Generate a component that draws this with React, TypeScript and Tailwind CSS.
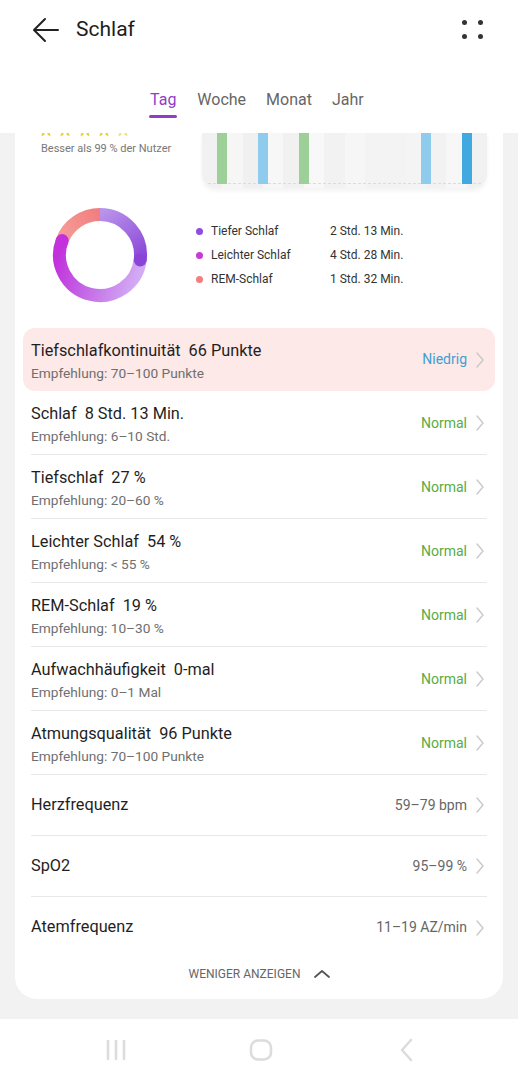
import React from "react";

const FONT = { fontFamily: "Roboto, 'Noto Sans', 'Liberation Sans', sans-serif" };

function Chevron() {
  return (
    <svg width="10" height="18" viewBox="0 0 10 18" className="shrink-0">
      <path d="M2 2 L8 9 L2 16" fill="none" stroke="#c9c9c9" strokeWidth="1.4" strokeLinecap="round" strokeLinejoin="round" />
    </svg>
  );
}

function pt(r: number, a: number) {
  const rad = (a * Math.PI) / 180;
  return [50 + r * Math.sin(rad), 50 - r * Math.cos(rad)];
}
function arc(r: number, a0: number, a1: number) {
  const [x0, y0] = pt(r, a0);
  const [x1, y1] = pt(r, a1);
  const large = a1 - a0 > 180 ? 1 : 0;
  return `M ${x0} ${y0} A ${r} ${r} 0 ${large} 1 ${x1} ${y1}`;
}

function Donut() {
  const r = 40.5;
  const sw = 13;
  const [dx, dy] = pt(r, 97);
  const [lx, ly] = pt(r, 291);
  return (
    <svg width="100" height="100" viewBox="0 0 100 100">
      <defs>
        <linearGradient id="gDeep" gradientUnits="userSpaceOnUse" x1="52" y1="8" x2="88" y2="58">
          <stop offset="0" stopColor="#b893ea" />
          <stop offset="1" stopColor="#8a44d8" />
        </linearGradient>
        <linearGradient id="gLight" gradientUnits="userSpaceOnUse" x1="92" y1="60" x2="12" y2="35">
          <stop offset="0" stopColor="#d2abf4" />
          <stop offset="0.5" stopColor="#c56fe8" />
          <stop offset="1" stopColor="#c231dc" />
        </linearGradient>
        <linearGradient id="gRem" gradientUnits="userSpaceOnUse" x1="12" y1="30" x2="50" y2="10">
          <stop offset="0" stopColor="#f59c98" />
          <stop offset="1" stopColor="#f27d7f" />
        </linearGradient>
      </defs>
      <path d={arc(r, 291, 360)} fill="none" stroke="url(#gRem)" strokeWidth={sw} />
      <path d={arc(r, 97, 291)} fill="none" stroke="url(#gLight)" strokeWidth={sw} />
      <circle cx={lx} cy={ly} r={sw / 2} fill="#c231dc" />
      <path d={arc(r, 0, 97)} fill="none" stroke="url(#gDeep)" strokeWidth={sw} />
      <circle cx={dx} cy={dy} r={sw / 2} fill="#8a44d8" />
    </svg>
  );
}

function Stars() {
  // only the bottom tips of the star row are visible (scrolled under the header)
  const xs = [5, 24, 44, 63, 82];
  return (
    <svg width="90" height="4" viewBox="0 0 90 4">
      {xs.map((x, i) => (
        <g key={i} fill={i === 4 ? "#f6e07e" : "#f0cf3a"}>
          <polygon points={`${x - 4},0 ${x - 4.5},3.5 ${x - 1.5},1.8 ${x - 1.5},0`} />
          <polygon points={`${x + 1.5},0 ${x + 1.5},1.8 ${x + 4.5},3.5 ${x + 4},0`} />
        </g>
      ))}
    </svg>
  );
}

const stripes = [
  "#f1f1f1", "#f6f6f6", "#f0f0f0", "#f7f7f7", "#f1f1f1", "#f8f8f8", "#f2f2f2",
  "#f6f6f6", "#f3f3f3", "#f3f3f3", "#f4f4f4", "#f2f2f2", "#f7f7f7", "#f1f1f1",
];

function Chart() {
  const bars = [
    { x: 15, c: "#9dd098" },
    { x: 56, c: "#8ecbec" },
    { x: 97, c: "#9dd098" },
    { x: 219, c: "#8ecbec" },
    { x: 260, c: "#3fa9e0" },
  ];
  return (
    <div className="relative h-[55px] w-[285px] overflow-hidden rounded-b-[14px] shadow-[0_3px_4px_rgba(0,0,0,0.05)]">
      <div className="flex h-full w-full">
        {stripes.map((c, i) => (
          <div key={i} className="h-full flex-1" style={{ backgroundColor: c }} />
        ))}
      </div>
      <div className="absolute left-[6px] right-[6px] top-[50px] border-t border-dashed border-[#dcdcdc]" />
      {bars.map((b, i) => (
        <div
          key={i}
          className="absolute top-0 h-[51px] w-[10px]"
          style={{ left: b.x, backgroundColor: b.c }}
        />
      ))}
    </div>
  );
}

type Row = { title: string; value: string; sub: string; status: string };

const rows: Row[] = [
  { title: "Schlaf", value: "8 Std. 13 Min.", sub: "Empfehlung: 6–10 Std.", status: "Normal" },
  { title: "Tiefschlaf", value: "27 %", sub: "Empfehlung: 20–60 %", status: "Normal" },
  { title: "Leichter Schlaf", value: "54 %", sub: "Empfehlung: < 55 %", status: "Normal" },
  { title: "REM-Schlaf", value: "19 %", sub: "Empfehlung: 10–30 %", status: "Normal" },
  { title: "Aufwachhäufigkeit", value: "0-mal", sub: "Empfehlung: 0–1 Mal", status: "Normal" },
  { title: "Atmungsqualität", value: "96 Punkte", sub: "Empfehlung: 70–100 Punkte", status: "Normal" },
];

const simple = [
  { title: "Herzfrequenz", value: "59–79 bpm" },
  { title: "SpO2", value: "95–99 %" },
  { title: "Atemfrequenz", value: "11–19 AZ/min" },
];

export default function App() {
  return (
    <div className="flex h-[1080px] w-[518px] flex-col overflow-hidden bg-white" style={FONT}>
      {/* Header */}
      <div className="h-[133px] shrink-0 bg-white">
        <div className="flex h-[58px] items-center pl-[32px] pr-[32px] pt-[1px]">
          <svg width="28" height="26" viewBox="0 0 28 26" className="shrink-0">
            <path d="M26 13 H3 M13 2 L2 13 L13 24" fill="none" stroke="#222" strokeWidth="2" strokeLinecap="round" strokeLinejoin="round" />
          </svg>
          <div className="ml-[16px] text-[21px] text-[#1d1d1d]">Schlaf</div>
          <div className="ml-auto grid grid-cols-2 gap-x-[11px] gap-y-[9px] pr-[3px]">
            <span className="h-[5px] w-[5px] rounded-full bg-[#333]" />
            <span className="h-[5px] w-[5px] rounded-full bg-[#333]" />
            <span className="h-[5px] w-[5px] rounded-full bg-[#333]" />
            <span className="h-[5px] w-[5px] rounded-full bg-[#333]" />
          </div>
        </div>
        <div className="flex h-[75px] items-start justify-center pt-[31px] text-[16px]">
          <div className="flex gap-[20px] pr-[5px]">
            <div className="flex flex-col items-center">
              <span className="leading-[22px] text-[#8e3ec8]">Tag</span>
              <span className="mt-[4px] h-[3px] w-[28px] rounded-full bg-[#8e3ec8]" />
            </div>
            <span className="leading-[22px] text-[#666]">Woche</span>
            <span className="leading-[22px] text-[#666]">Monat</span>
            <span className="leading-[22px] text-[#666]">Jahr</span>
          </div>
        </div>
      </div>

      {/* Content */}
      <div className="flex-1 bg-[#f2f2f2] px-[15px] pb-[20px]">
        <div className="rounded-b-[22px] bg-white pb-[16px]">
          {/* top: stars + chart */}
          <div className="flex h-[55px]">
            <div className="w-[187px] pl-[26px]">
              <Stars />
              <div className="mt-[5px] text-[11px] leading-[14px] text-[#777]">Besser als 99 % der Nutzer</div>
            </div>
            <Chart />
          </div>

          {/* donut + legend */}
          <div className="mt-[17px] flex h-[100px] items-center">
            <div className="ml-[35px]">
              <Donut />
            </div>
            <div className="ml-[46px] flex flex-col gap-[10px] text-[12px] leading-[14px] text-[#333]">
              {[
                { c: "#8e4de0", l: "Tiefer Schlaf", v: "2 Std. 13 Min." },
                { c: "#c83ad8", l: "Leichter Schlaf", v: "4 Std. 28 Min." },
                { c: "#f27f7f", l: "REM-Schlaf", v: "1 Std. 32 Min." },
              ].map((x) => (
                <div key={x.l} className="flex items-center">
                  <span className="h-[7px] w-[7px] rounded-full" style={{ backgroundColor: x.c }} />
                  <span className="ml-[8px] w-[119px]">{x.l}</span>
                  <span>{x.v}</span>
                </div>
              ))}
            </div>
          </div>

          {/* highlighted */}
          <div className="mx-[8px] mt-[23px] flex h-[63px] items-center rounded-[12px] bg-[#fde9e7] pl-[8px] pr-[10px]">
            <div className="flex-1 pt-[3px]">
              <div className="text-[16.3px] leading-[20px] text-[#1f1f1f]">
                Tiefschlafkontinuität<span className="ml-[8px]">66 Punkte</span>
              </div>
              <div className="mt-[4px] text-[13.7px] leading-[16px] text-[#6f6f6f]">Empfehlung: 70–100 Punkte</div>
            </div>
            <span className="mr-[8px] text-[14px] text-[#3f9fd3]">Niedrig</span>
            <Chevron />
          </div>

          {/* rows */}
          <div className="px-[16px]">
            {rows.map((r) => (
              <div key={r.title} className="flex h-[64px] items-center border-b border-[#e8e8e8] pr-[2px]">
                <div className="flex-1 pt-[3px]">
                  <div className="text-[16.3px] leading-[20px] text-[#1f1f1f]">
                    {r.title}
                    <span className="ml-[8px]">{r.value}</span>
                  </div>
                  <div className="mt-[4px] text-[13.7px] leading-[16px] text-[#6f6f6f]">{r.sub}</div>
                </div>
                <span className="mr-[8px] pt-[2px] text-[14px] text-[#5aab45]">{r.status}</span>
                <Chevron />
              </div>
            ))}
            {simple.map((r, i) => (
              <div
                key={r.title}
                className={`flex h-[61px] items-center pr-[2px] ${i < simple.length - 1 ? "border-b border-[#e8e8e8]" : ""}`}
              >
                <div className="flex-1 text-[16.3px] text-[#1f1f1f]">{r.title}</div>
                <span className="mr-[8px] text-[14px] text-[#666]">{r.value}</span>
                <Chevron />
              </div>
            ))}
          </div>

          <div className="mt-[7px] flex items-center justify-center gap-[13px] pl-[2px]">
            <span className="text-[12px] text-[#666]">WENIGER ANZEIGEN</span>
            <svg width="18" height="10" viewBox="0 0 18 10">
              <path d="M2 8 L9 2 L16 8" fill="none" stroke="#555" strokeWidth="1.8" strokeLinecap="round" strokeLinejoin="round" />
            </svg>
          </div>
        </div>
      </div>

      {/* Nav bar */}
      <div className="flex h-[62px] shrink-0 items-center justify-center bg-white">
        <svg width="22" height="24" viewBox="0 0 22 24">
          <path d="M3 3 V21 M11 3 V21 M19 3 V21" stroke="#dcdcdc" strokeWidth="2.6" strokeLinecap="round" />
        </svg>
        <svg width="24" height="24" viewBox="0 0 24 24" className="ml-[122px]">
          <rect x="2" y="2.5" width="20" height="19" rx="7" fill="none" stroke="#dcdcdc" strokeWidth="2.6" />
        </svg>
        <svg width="16" height="24" viewBox="0 0 16 24" className="ml-[125px]">
          <path d="M13 2 L4 12 L13 22" fill="none" stroke="#dcdcdc" strokeWidth="2.6" strokeLinecap="round" strokeLinejoin="round" />
        </svg>
      </div>
    </div>
  );
}
